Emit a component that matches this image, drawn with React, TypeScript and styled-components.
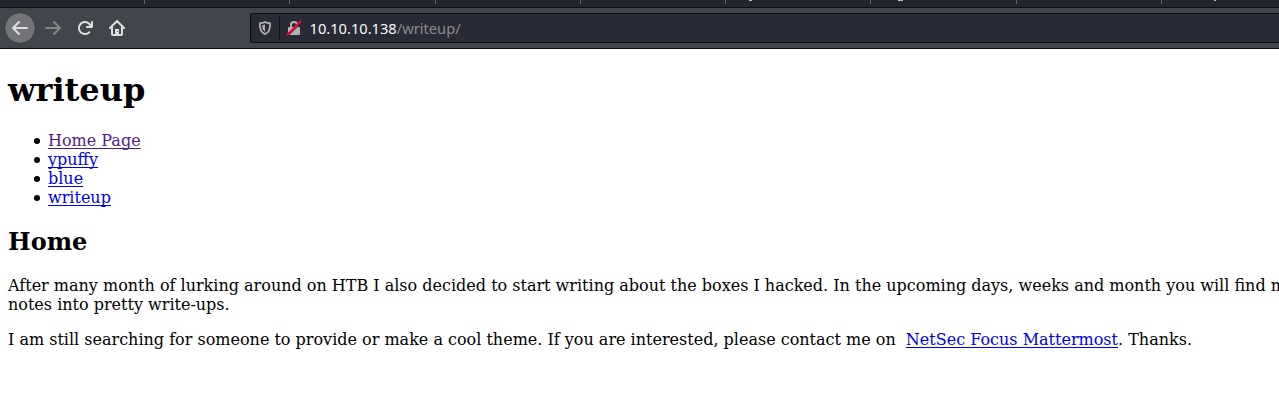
import React from "react";
import styled, { createGlobalStyle } from "styled-components";

const GlobalStyle = createGlobalStyle`
  html, body { margin: 0; background: #fff; overflow: hidden; }
`;

const Window = styled.div`
  width: 1279px;
  height: 400px;
  overflow: hidden;
  background: #fff;
`;

const TabStrip = styled.div`
  display: flex;
  box-sizing: border-box;
  height: 8px;
  background: #23252e;
  border-bottom: 1px solid #0e0f15;
`;

const Tab = styled.div<{ $width: number }>`
  box-sizing: border-box;
  flex: none;
  width: ${(p) => p.$width}px;
  height: 4px;
  border-right: 1px solid #62646b;
`;

const TitleTip = styled.div<{ $left: number; $width: number }>`
  width: ${(p) => p.$width}px;
  height: 1px;
  margin-left: ${(p) => p.$left}px;
  background: #b9c4c8;
`;

const Toolbar = styled.div`
  display: flex;
  align-items: center;
  box-sizing: border-box;
  height: 41px;
  padding-left: 4px;
  background: #42454c;
  border-bottom: 1px solid #08080c;
`;

const ToolButton = styled.span<{ $dim?: boolean }>`
  display: flex;
  align-items: center;
  justify-content: center;
  flex: none;
  width: 32px;
  height: 32px;
  color: ${(p) => (p.$dim ? "#85868a" : "#dededd")};
`;

const BackButton = styled(ToolButton)`
  box-sizing: border-box;
  margin-right: 1px;
  border: 1px solid #34363b;
  border-radius: 50%;
  background: #737477;
`;

const AddressBar = styled.div`
  display: flex;
  align-items: center;
  box-sizing: border-box;
  flex: 1;
  height: 30px;
  margin-left: 117px;
  padding-left: 6px;
  border: 1px solid #0d0e14;
  border-right: 0;
  border-radius: 3px 0 0 3px;
  background: #282a35;
  color: #b1b1b3;
`;

const Divider = styled.span`
  width: 1px;
  height: 22px;
  margin: 0 6px;
  background: #0d0e14;
`;

const Url = styled.span`
  margin-left: 7.5px;
  font: 14.667px/20px "Noto Sans", sans-serif;
  color: #8b8c91;
  white-space: nowrap;
`;

const Host = styled.span`
  color: #f9f9fa;
`;

const Nav = styled.div`
  display: flex;
`;

const Page = styled.main`
  display: flow-root;
  padding: 0 8px;
  font: 16px/19px "DejaVu Serif", serif;
  color: #000;
  white-space: nowrap;
`;

const Title = styled.h1`
  margin: 22px 0;
  font-size: 32px;
  line-height: 38px;
`;

const Links = styled.ul`
  margin: 0;
  padding-left: 26px;
  list-style: none;
`;

const LinkItem = styled.li`
  display: flex;
  align-items: center;
  gap: 8px;

  &::before {
    content: "";
    width: 6px;
    height: 6px;
    margin-top: 1px;
    border-radius: 50%;
    background: #000;
  }
`;

const Link = styled.a<{ $visited?: boolean }>`
  color: ${(p) => (p.$visited ? "#551a8b" : "#0000ee")};
  text-decoration: underline 1px;
  text-underline-offset: 2px;
  text-decoration-skip-ink: none;
`;

const Heading = styled.h2`
  margin: 20px 0;
  font-size: 24px;
  line-height: 29px;
`;

const Paragraph = styled.p`
  margin: 16px 0;
`;

const Arrow = ({ flip }: { flip?: boolean }) => (
  <svg width="16" height="16" viewBox="0 0 16 16" fill="currentColor">
    <path
      transform={flip ? "matrix(-1 0 0 1 16 0)" : undefined}
      d="M15 7H3.414l4.293-4.293a1 1 0 0 0-1.414-1.414l-6 6a1 1 0 0 0 0 1.414l6 6a1 1 0 0 0 1.414-1.414L3.414 9H15a1 1 0 0 0 0-2z"
    />
  </svg>
);

const Reload = () => (
  <svg width="16" height="16" viewBox="0 0 16 16" fill="currentColor">
    <path d="M15 1a1 1 0 0 0-1 1v2.418A6.995 6.995 0 1 0 8 15a6.954 6.954 0 0 0 4.95-2.05 1 1 0 0 0-1.414-1.414A5.019 5.019 0 1 1 12.549 6H10a1 1 0 0 0 0 2h5a1 1 0 0 0 1-1V2a1 1 0 0 0-1-1z" />
  </svg>
);

const Home = () => (
  <svg width="16" height="16" viewBox="0 0 16 16" fill="none" stroke="currentColor" strokeWidth="2" strokeLinecap="round" strokeLinejoin="round">
    <path d="M1 8l7-7 7 7M3 7.5V14a1 1 0 0 0 1 1h8a1 1 0 0 0 1-1V7.5" />
    <path d="M6 15V9h4v6z" fill="currentColor" stroke="none" />
    <circle cx="8.500" cy="11.500" r="0.600" fill="#42454c" stroke="none" />
  </svg>
);

const Shield = () => (
  <svg width="16" height="16" viewBox="0 0 16 16">
    <path d="M8 1.900C6.500 2.800 4.700 3 2.900 3.100C2.600 8.500 3.500 12.500 8 14.200C12.500 12.500 13.400 8.500 13.100 3.100C11.300 3 9.500 2.800 8 1.900Z" fill="none" stroke="currentColor" strokeWidth="1.800" strokeLinejoin="round" />
    <path d="M8 4.500v7.200C5.700 10.300 5.200 8.200 5.200 5.300C6.300 5.200 7.200 4.900 8 4.500Z" fill="currentColor" />
  </svg>
);

const InsecureLock = () => (
  <svg width="16" height="16" viewBox="0 0 16 16">
    <path d="M5 8V5a3 3 0 0 1 6 0v3" fill="none" stroke="currentColor" strokeWidth="2" />
    <rect x="2" y="7" width="12" height="8" rx="1" fill="currentColor" />
    <path d="M2 15.200L15 2.200" stroke="#282a35" strokeWidth="1.800" />
    <path d="M1.500 14.500L14.500 1.500" stroke="#ff0039" strokeWidth="1.900" strokeLinecap="round" />
  </svg>
);

export default function App() {
  return (
    <Window>
      <GlobalStyle />
      <TabStrip>
        <Tab $width={145} />
        <Tab $width={145} />
        <Tab $width={146} />
        <Tab $width={145} />
        <Tab $width={145} />
        <Tab $width={145}><TitleTip $left={23} $width={3} /></Tab>
        <Tab $width={146}><TitleTip $left={27} $width={5} /></Tab>
        <Tab $width={145} />
        <Tab $width={145}><TitleTip $left={52} $width={2} /></Tab>
      </TabStrip>
      <Toolbar>
        <BackButton><Arrow /></BackButton>
        <Nav>
          <ToolButton $dim><Arrow flip /></ToolButton>
          <ToolButton><Reload /></ToolButton>
          <ToolButton><Home /></ToolButton>
        </Nav>
        <AddressBar>
          <Shield />
          <Divider />
          <InsecureLock />
          <Url><Host>10.10.10.138</Host>/writeup/</Url>
        </AddressBar>
      </Toolbar>
      <Page>
        <Title>writeup</Title>
        <Links>
          <LinkItem><Link $visited>Home Page</Link></LinkItem>
          <LinkItem><Link>ypuffy</Link></LinkItem>
          <LinkItem><Link>blue</Link></LinkItem>
          <LinkItem><Link>writeup</Link></LinkItem>
        </Links>
        <Heading>Home</Heading>
        <Paragraph>
          After many month of lurking around on HTB I also decided to start writing about the boxes I hacked. In the upcoming days, weeks and month you will find m
          <br />
          notes into pretty write-ups.
        </Paragraph>
        <Paragraph>
          I am still searching for someone to provide or make a cool theme. If you are interested, please contact me on &nbsp;<Link>NetSec Focus Mattermost</Link>. Thanks.
        </Paragraph>
      </Page>
    </Window>
  );
}
